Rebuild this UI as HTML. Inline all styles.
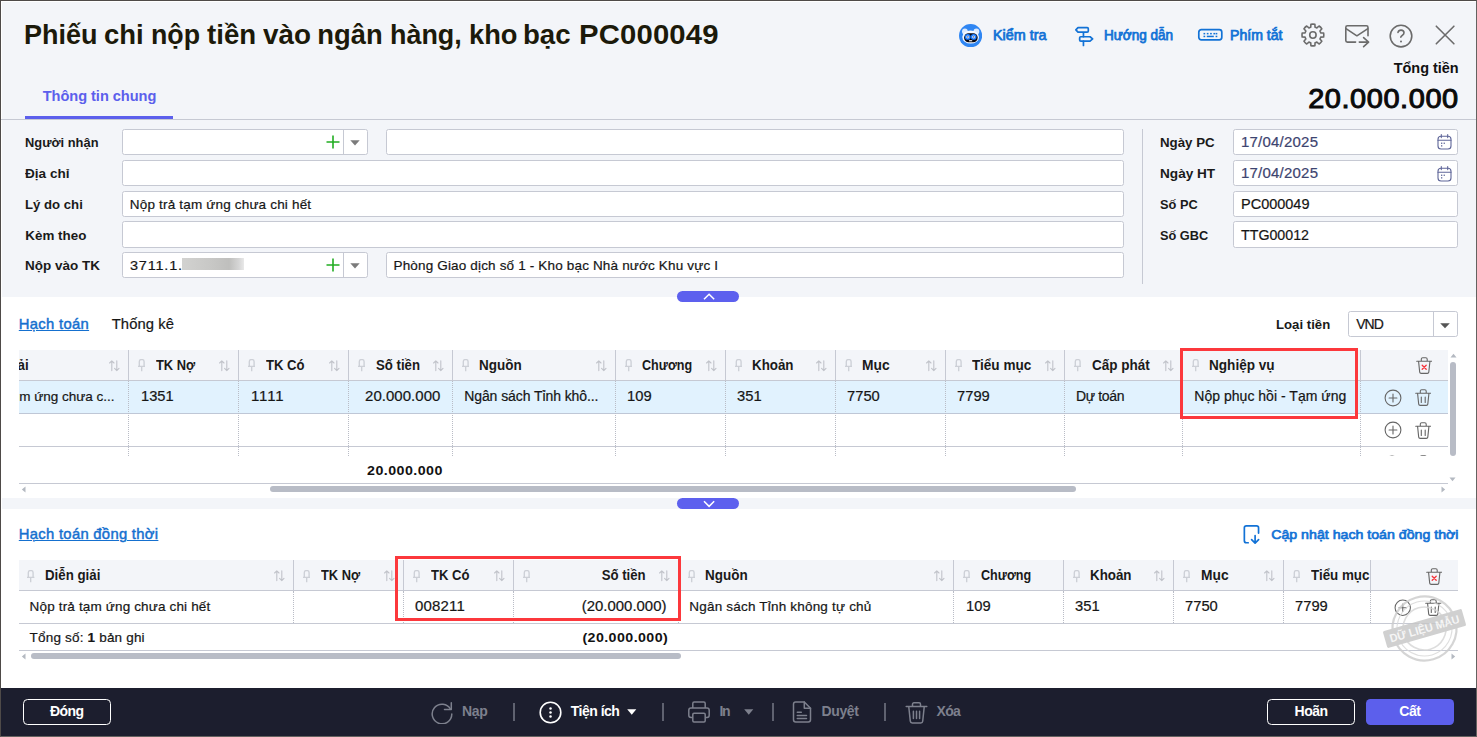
<!DOCTYPE html>
<html lang="vi">
<head>
<meta charset="utf-8">
<title>Phiếu chi nộp tiền vào ngân hàng, kho bạc PC000049</title>
<style>
*{box-sizing:border-box;margin:0;padding:0}
html,body{width:1477px;height:737px;overflow:hidden}
body{background:#f3f5f9;font-family:"Liberation Sans",sans-serif;font-size:14px;color:#1f1f1f;position:relative}
.a{position:absolute;white-space:nowrap}
.b{font-weight:700}
b{font-weight:700}
#frame{position:absolute;left:0;top:0;width:1477px;height:737px;border:1px solid #4e4a48;border-right-color:#646260;border-bottom-color:#646260;pointer-events:none;z-index:50}
#frame2{position:absolute;left:1px;top:1px;width:1475px;height:1px;background:#fff}
#frame3{position:absolute;left:1px;top:1px;width:1px;height:687px;background:#fff}
</style>
</head>
<body>
<div id="frame"></div><div id="frame2"></div><div id="frame3"></div>
<h1 class="a" style="left:0;top:0;width:760px;height:60px;font-size:27.400px;font-weight:700"><span class="a " style="top:18.80px;font-size:27.4px;line-height:31px;color:#1c1a0a;font-weight:700;left:24.10px;transform:scaleX(0.9855);transform-origin:0 50%;">Phiếu</span> <span class="a " style="top:18.80px;font-size:27.4px;line-height:31px;color:#1c1a0a;font-weight:700;left:104.40px;transform:scaleX(1.0031);transform-origin:0 50%;">chi</span> <span class="a " style="top:18.80px;font-size:27.4px;line-height:31px;color:#1c1a0a;font-weight:700;left:151.40px;transform:scaleX(0.9780);transform-origin:0 50%;">nộp</span> <span class="a " style="top:18.80px;font-size:27.4px;line-height:31px;color:#1c1a0a;font-weight:700;left:207.30px;transform:scaleX(1.0102);transform-origin:0 50%;">tiền</span> <span class="a " style="top:18.80px;font-size:27.4px;line-height:31px;color:#1c1a0a;font-weight:700;left:263.00px;transform:scaleX(1.0169);transform-origin:0 50%;">vào</span> <span class="a " style="top:18.80px;font-size:27.4px;line-height:31px;color:#1c1a0a;font-weight:700;left:317.30px;">ngân</span> <span class="a " style="top:18.80px;font-size:27.4px;line-height:31px;color:#1c1a0a;font-weight:700;left:389.60px;transform:scaleX(0.9829);transform-origin:0 50%;">hàng,</span> <span class="a " style="top:18.80px;font-size:27.4px;line-height:31px;color:#1c1a0a;font-weight:700;left:468.60px;transform:scaleX(0.9958);transform-origin:0 50%;">kho</span> <span class="a " style="top:18.80px;font-size:27.4px;line-height:31px;color:#1c1a0a;font-weight:700;left:523.40px;transform:scaleX(1.0084);transform-origin:0 50%;">bạc</span> <span class="a " style="top:18.80px;font-size:27.4px;line-height:31px;color:#1c1a0a;font-weight:700;letter-spacing:0.132px;left:578.60px;transform:scaleX(1.0700);transform-origin:0 50%;">PC000049</span></h1>
<div class="a " style="top:87.60px;font-size:14.6px;line-height:16px;color:#5c5fec;font-weight:700;letter-spacing:-0.043px;left:42.70px;">Thông tin chung</div>
<div class="a" style="left:25px;top:116px;width:148px;height:3px;background:#5c5fec"></div>
<div class="a" style="left:1px;top:119px;width:1475px;height:1px;background:#c6c9d3"></div>
<svg class="a" style="left:958.9px;top:23.7px;" width="23.2" height="23.4" viewBox="0 0 23.2 23.4" fill="none"><circle cx="11.600" cy="11.700" r="11.600" fill="#2f86f3"/>
<circle cx="5.900" cy="7.400" r="2.900" fill="#dbe9fd"/><circle cx="17.400" cy="7.400" r="2.900" fill="#dbe9fd"/>
<ellipse cx="11.650" cy="13" rx="8.400" ry="6.600" fill="#f4f8ff"/>
<rect x="5.100" y="9.300" width="13.600" height="9" rx="4.500" fill="#05050f"/>
<circle cx="8.800" cy="12.900" r="2.900" fill="#1a7bff"/><circle cx="14.700" cy="12.900" r="2.900" fill="#1a7bff"/>
<circle cx="8.800" cy="12.900" r="1.500" fill="#eef4ff"/><circle cx="14.700" cy="12.900" r="1.500" fill="#eef4ff"/>
<circle cx="8.900" cy="12.900" r=".65" fill="#1c1c40"/><circle cx="14.800" cy="12.900" r=".65" fill="#1c1c40"/>
<rect x="10.100" y="16.200" width="3.100" height="1.100" fill="#fff"/></svg>
<div class="a " style="top:28.00px;font-size:13.8px;line-height:15px;color:#1272d6;-webkit-text-stroke:.2px;left:993.20px;transform:scaleX(1.0394);transform-origin:0 50%;-webkit-text-stroke:.75px;">Kiểm tra</div>
<svg class="a" style="left:1073px;top:25px;" width="22" height="22" viewBox="0 0 22 22" fill="none"><g stroke="#1272d6" stroke-width="1.700" stroke-linejoin="round" stroke-linecap="round"><path d="M10.450 7.100v4.600M10.450 16.100v4.300M5 2.550h9.200c.6 0 1.100.5 1.100 1.100v2.300c0 .6-.5 1.100-1.100 1.100H5L2.850 4.800z"/><path d="M7.750 11.750h9.300l2.600 2.150-2.600 2.150H7.750c-.6 0-1.100-.5-1.100-1.100v-2.100c0-.6.500-1.100 1.100-1.100z"/></g></svg>
<div class="a " style="top:28.00px;font-size:13.8px;line-height:15px;color:#1272d6;-webkit-text-stroke:.2px;left:1104.20px;transform:scaleX(0.9794);transform-origin:0 50%;-webkit-text-stroke:.75px;">Hướng dẫn</div>
<svg class="a" style="left:1197px;top:27px;" width="27" height="16" viewBox="0 0 27 16" fill="none"><rect x="1.800" y="2.650" width="23" height="10.200" rx="2.500" stroke="#1272d6" stroke-width="1.700"/>
<g fill="#1272d6"><rect x="6.500" y="5.900" width="1.700" height="1.500"/><rect x="9.800" y="5.900" width="1.700" height="1.500"/><rect x="13.100" y="5.900" width="1.700" height="1.500"/><rect x="16.400" y="5.900" width="1.700" height="1.500"/><rect x="18.600" y="5.900" width="1.700" height="1.500"/><rect x="6.500" y="8.700" width="1.700" height="1.500"/><rect x="9.800" y="8.700" width="7" height="1.500"/><rect x="18.600" y="8.700" width="1.700" height="1.500"/></g></svg>
<div class="a " style="top:28.00px;font-size:13.8px;line-height:15px;color:#1272d6;-webkit-text-stroke:.2px;left:1230.40px;transform:scaleX(1.0219);transform-origin:0 50%;-webkit-text-stroke:.75px;">Phím tắt</div>
<svg class="a" style="left:1300px;top:22px;" width="26" height="26" viewBox="0 0 26 26" fill="none"><path d="M10.74 5.19L10.91 2.28A10.9 10.9 0 0 1 14.89 2.28L15.06 5.19A8.1 8.1 0 0 1 16.89 5.95L19.07 4.02A10.9 10.9 0 0 1 21.88 6.83L19.95 9.01A8.1 8.1 0 0 1 20.71 10.84L23.62 11.01A10.9 10.9 0 0 1 23.62 14.99L20.71 15.16A8.1 8.1 0 0 1 19.95 16.99L21.88 19.17A10.9 10.9 0 0 1 19.07 21.98L16.89 20.05A8.1 8.1 0 0 1 15.06 20.81L14.89 23.72A10.9 10.9 0 0 1 10.91 23.72L10.74 20.81A8.1 8.1 0 0 1 8.91 20.05L6.73 21.98A10.9 10.9 0 0 1 3.92 19.17L5.85 16.99A8.1 8.1 0 0 1 5.09 15.16L2.18 14.99A10.9 10.9 0 0 1 2.18 11.01L5.09 10.84A8.1 8.1 0 0 1 5.85 9.01L3.92 6.83A10.9 10.9 0 0 1 6.73 4.02L8.91 5.95A8.1 8.1 0 0 1 10.74 5.19Z" stroke="#6b6b6b" stroke-width="1.600" stroke-linejoin="round"/><circle cx="12.900" cy="13" r="3.200" stroke="#6b6b6b" stroke-width="1.600"/></svg>
<svg class="a" style="left:1343px;top:23px;" width="28" height="26" viewBox="0 0 28 26" fill="none"><g stroke="#6b6b6b" stroke-width="1.600" stroke-linecap="round" stroke-linejoin="round"><path d="M12.600 19.100H4.400c-.9 0-1.600-.7-1.600-1.600V4.400c0-.9.700-1.600 1.600-1.600h19c.9 0 1.600.7 1.600 1.600v8.300"/><path d="M3.400 5.800l10.500 7 10.600-7"/><path d="M16.300 19.100h9.200M20.600 14.600l5 4.500-5 4.500"/></g></svg>
<svg class="a" style="left:1388px;top:23px;" width="26" height="26" viewBox="0 0 26 26" fill="none"><circle cx="13" cy="13.100" r="10.800" stroke="#6b6b6b" stroke-width="1.600"/><path d="M10 9.400c.3-1.500 1.500-2.300 3-2.300 1.700 0 3 1.100 3 2.700 0 2.200-2.400 2.600-3.200 4.300" stroke="#6b6b6b" stroke-width="1.600" stroke-linecap="round"/><circle cx="13" cy="18.600" r="1" fill="#6b6b6b"/></svg>
<svg class="a" style="left:1433px;top:23px;" width="24" height="24" viewBox="0 0 24 24" fill="none"><path d="M3.300 3.200l17.600 17.600M20.900 3.200L3.300 20.800" stroke="#6b6b6b" stroke-width="1.600" stroke-linecap="round"/></svg>
<div class="a " style="top:60.40px;font-size:14.6px;line-height:16px;color:#111;font-weight:700;right:18.40px;transform:scaleX(0.9898);transform-origin:100% 50%;">Tổng tiền</div>
<div class="a " style="top:84.40px;font-size:27px;line-height:30px;color:#0a0a0a;letter-spacing:0.561px;right:18.20px;transform:scaleX(1.0700);transform-origin:100% 50%;-webkit-text-stroke:1px #0a0a0a;">20.000.000</div>
<div class="a " style="top:134.90px;font-size:13.4px;line-height:15px;color:#1a1a1a;font-weight:700;left:25.30px;transform:scaleX(0.9608);transform-origin:0 50%;">Người nhận</div>
<div class="a " style="top:166.10px;font-size:13.4px;line-height:15px;color:#1a1a1a;font-weight:700;left:25.30px;transform:scaleX(1.0135);transform-origin:0 50%;">Địa chỉ</div>
<div class="a " style="top:197.10px;font-size:13.4px;line-height:15px;color:#1a1a1a;font-weight:700;left:25.30px;transform:scaleX(0.9833);transform-origin:0 50%;">Lý do chi</div>
<div class="a " style="top:228.00px;font-size:13.4px;line-height:15px;color:#1a1a1a;font-weight:700;left:25.30px;">Kèm theo</div>
<div class="a " style="top:258.00px;font-size:13.4px;line-height:15px;color:#1a1a1a;font-weight:700;left:25.30px;transform:scaleX(1.0066);transform-origin:0 50%;">Nộp vào TK</div>
<div class="a" style="left:122px;top:129px;width:246px;height:26px;background:#fff;border:1px solid #c6c9d3;border-radius:2.500px;"></div>
<div class="a" style="left:343px;top:130px;width:1px;height:24px;background:#c6c9d3"></div>
<svg class="a" style="left:326px;top:135px;" width="14" height="14" viewBox="0 0 14 14" fill="none"><path d="M7 .5v13M.5 7h13" stroke="#22ad22" stroke-width="1.600"/></svg>
<svg class="a" style="left:350px;top:139.5px;" width="10" height="6" viewBox="0 0 10 6" fill="none"><path d="M.3.300h9.400L5 5.500z" fill="#7b7b7b"/></svg>
<div class="a" style="left:122px;top:252px;width:246px;height:26px;background:#fff;border:1px solid #c6c9d3;border-radius:2.500px;"></div>
<div class="a" style="left:343px;top:253px;width:1px;height:24px;background:#c6c9d3"></div>
<svg class="a" style="left:326px;top:258px;" width="14" height="14" viewBox="0 0 14 14" fill="none"><path d="M7 .5v13M.5 7h13" stroke="#22ad22" stroke-width="1.600"/></svg>
<svg class="a" style="left:350px;top:262.5px;" width="10" height="6" viewBox="0 0 10 6" fill="none"><path d="M.3.300h9.400L5 5.500z" fill="#7b7b7b"/></svg>
<div class="a" style="left:386px;top:129px;width:738px;height:26px;background:#fff;border:1px solid #c6c9d3;border-radius:2.500px;"></div>
<div class="a" style="left:386px;top:252px;width:738px;height:26px;background:#fff;border:1px solid #c6c9d3;border-radius:2.500px;"></div>
<div class="a" style="left:122px;top:160px;width:1002px;height:26px;background:#fff;border:1px solid #c6c9d3;border-radius:2.500px;"></div>
<div class="a" style="left:122px;top:191px;width:1002px;height:26px;background:#fff;border:1px solid #c6c9d3;border-radius:2.500px;"></div>
<div class="a" style="left:122px;top:221px;width:1002px;height:27px;background:#fff;border:1px solid #c6c9d3;border-radius:2.500px;"></div>
<div class="a " style="top:197.10px;font-size:13.5px;line-height:15px;color:#161616;-webkit-text-stroke:.2px;letter-spacing:0.181px;left:129.80px;">Nộp trả tạm ứng chưa chi hết</div>
<div class="a " style="top:257.60px;font-size:13.5px;line-height:15px;color:#161616;-webkit-text-stroke:.2px;letter-spacing:0.759px;left:129.80px;transform:scaleX(1.0700);transform-origin:0 50%;">3711.1.</div>
<div class="a" style="left:182px;top:258px;width:62px;height:12px;background:linear-gradient(90deg,#d2d2d0 0%,#c8c8c6 45%,#bfbfbd 76%,#d6d6d6 92%,#e9e9e9 100%);"></div>
<div class="a " style="top:257.60px;font-size:13.5px;line-height:15px;color:#161616;-webkit-text-stroke:.2px;letter-spacing:0.164px;left:393.50px;">Phòng Giao dịch số 1 - Kho bạc Nhà nước Khu vực I</div>
<div class="a" style="left:1142px;top:129px;width:1px;height:155px;background:#c6c9d3"></div>
<div class="a " style="top:134.90px;font-size:13.4px;line-height:15px;color:#1a1a1a;font-weight:700;left:1159.70px;transform:scaleX(0.9931);transform-origin:0 50%;">Ngày PC</div>
<div class="a" style="left:1233px;top:129px;width:225px;height:26px;background:#fff;border:1px solid #c6c9d3;border-radius:2.500px;"></div>
<div class="a " style="top:166.10px;font-size:13.4px;line-height:15px;color:#1a1a1a;font-weight:700;left:1159.70px;transform:scaleX(1.0160);transform-origin:0 50%;">Ngày HT</div>
<div class="a" style="left:1233px;top:160px;width:225px;height:26px;background:#fff;border:1px solid #c6c9d3;border-radius:2.500px;"></div>
<div class="a " style="top:197.10px;font-size:13.4px;line-height:15px;color:#1a1a1a;font-weight:700;left:1159.70px;transform:scaleX(0.9559);transform-origin:0 50%;">Số PC</div>
<div class="a" style="left:1233px;top:191px;width:225px;height:26px;background:#fff;border:1px solid #c6c9d3;border-radius:2.500px;"></div>
<div class="a " style="top:228.00px;font-size:13.4px;line-height:15px;color:#1a1a1a;font-weight:700;left:1159.70px;transform:scaleX(0.9527);transform-origin:0 50%;">Số GBC</div>
<div class="a" style="left:1233px;top:221px;width:225px;height:27px;background:#fff;border:1px solid #c6c9d3;border-radius:2.500px;"></div>
<svg class="a" style="left:1436.5px;top:134px;" width="15" height="16" viewBox="0 0 15 16" fill="none"><g stroke="#5f6699" stroke-width="1.100"><rect x="1" y="2.300" width="13" height="12.700" rx="3"/><path d="M1 6.300h13M4.300.6v3M10.700.6v3" stroke-linecap="round"/></g><g fill="#5f6699"><rect x="4" y="8.600" width="1.300" height="1.300"/><rect x="6.600" y="8.600" width="1.300" height="1.300"/><rect x="4" y="11.200" width="1.300" height="1.300"/></g></svg>
<svg class="a" style="left:1436.5px;top:165.5px;" width="15" height="16" viewBox="0 0 15 16" fill="none"><g stroke="#5f6699" stroke-width="1.100"><rect x="1" y="2.300" width="13" height="12.700" rx="3"/><path d="M1 6.300h13M4.300.6v3M10.700.6v3" stroke-linecap="round"/></g><g fill="#5f6699"><rect x="4" y="8.600" width="1.300" height="1.300"/><rect x="6.600" y="8.600" width="1.300" height="1.300"/><rect x="4" y="11.200" width="1.300" height="1.300"/></g></svg>
<div class="a " style="top:133.90px;font-size:14px;line-height:16px;color:#3d4470;-webkit-text-stroke:.2px;letter-spacing:0.209px;left:1241.30px;transform:scaleX(1.0700);transform-origin:0 50%;">17/04/2025</div>
<div class="a " style="top:164.90px;font-size:14px;line-height:16px;color:#3d4470;-webkit-text-stroke:.2px;letter-spacing:0.209px;left:1241.30px;transform:scaleX(1.0700);transform-origin:0 50%;">17/04/2025</div>
<div class="a " style="top:195.90px;font-size:14px;line-height:16px;color:#161616;-webkit-text-stroke:.2px;left:1241.30px;transform:scaleX(1.0352);transform-origin:0 50%;">PC000049</div>
<div class="a " style="top:226.70px;font-size:14px;line-height:16px;color:#161616;-webkit-text-stroke:.2px;left:1241.30px;transform:scaleX(1.0159);transform-origin:0 50%;">TTG00012</div>
<div class="a" style="left:1px;top:297px;width:1475px;height:201px;background:#fff"></div>
<div class="a" style="left:1px;top:509px;width:1475px;height:179px;background:#fff"></div>
<div class="a" style="left:677px;top:291px;width:62px;height:11px;background:#5d60ee;border-radius:5.500px"></div>
<svg class="a" style="left:703px;top:293.2px;" width="12.2" height="7.5" viewBox="0 0 12.2 7.5" fill="none"><path d="M1 6.200L6.100 1.200l5.100 5" stroke="#fff" stroke-width="1.500" stroke-linecap="butt" stroke-linejoin="miter"/></svg>
<div class="a" style="left:677px;top:498px;width:62px;height:11px;background:#5d60ee;border-radius:5.500px"></div>
<svg class="a" style="left:703px;top:500px;" width="12.2" height="7.5" viewBox="0 0 12.2 7.5" fill="none"><path d="M1 1.200l5.100 5.200L11.200 1.200" stroke="#fff" stroke-width="1.500" stroke-linecap="butt" stroke-linejoin="miter"/></svg>
<div class="a " style="top:315.90px;font-size:14.8px;line-height:16px;color:#1570cf;-webkit-text-stroke:.2px;letter-spacing:0.318px;left:18.80px;text-decoration:underline;text-underline-offset:.6px;text-decoration-thickness:1.200px;-webkit-text-stroke:.45px;">Hạch toán</div>
<div class="a " style="top:315.90px;font-size:14.8px;line-height:16px;color:#161616;-webkit-text-stroke:.2px;letter-spacing:0.085px;left:111.70px;">Thống kê</div>
<div class="a " style="top:317.00px;font-size:13.4px;line-height:15px;color:#1a1a1a;font-weight:700;left:1275.80px;transform:scaleX(0.9843);transform-origin:0 50%;">Loại tiền</div>
<div class="a" style="left:1348px;top:311px;width:110px;height:26px;background:#fff;border:1px solid #c6c9d3;border-radius:2.500px;"></div>
<div class="a" style="left:1433px;top:312px;width:1px;height:24px;background:#c6c9d3"></div>
<div class="a " style="top:316.00px;font-size:14px;line-height:16px;color:#161616;-webkit-text-stroke:.2px;letter-spacing:-0.981px;left:1356.20px;">VND</div>
<svg class="a" style="left:1440px;top:322.5px;" width="10" height="6" viewBox="0 0 10 6" fill="none"><path d="M.2.300h9.600L5 5.300z" fill="#555"/></svg>
<div class="a" style="left:19px;top:350px;width:1429px;height:30px;background:#f3f5f9"></div>
<div class="a" style="left:19px;top:380px;width:1429px;height:1px;background:#c6c9d3"></div>
<div class="a" style="left:19px;top:381px;width:1429px;height:32px;background:#e1f2fe"></div>
<div class="a" style="left:19px;top:413px;width:1429px;height:1px;background:#bfc7d6"></div>
<div class="a" style="left:19px;top:446px;width:1429px;height:1px;background:#c6c9d3"></div>
<div class="a" style="left:128px;top:350px;width:1px;height:30px;background:#c6c9d3"></div>
<div class="a" style="left:128px;top:381px;width:0px;height:75px;border-left:1px dotted #b9bcc6"></div>
<div class="a" style="left:238px;top:350px;width:1px;height:30px;background:#c6c9d3"></div>
<div class="a" style="left:238px;top:381px;width:0px;height:75px;border-left:1px dotted #b9bcc6"></div>
<div class="a" style="left:348px;top:350px;width:1px;height:30px;background:#c6c9d3"></div>
<div class="a" style="left:348px;top:381px;width:0px;height:75px;border-left:1px dotted #b9bcc6"></div>
<div class="a" style="left:452px;top:350px;width:1px;height:30px;background:#c6c9d3"></div>
<div class="a" style="left:452px;top:381px;width:0px;height:75px;border-left:1px dotted #b9bcc6"></div>
<div class="a" style="left:615px;top:350px;width:1px;height:30px;background:#c6c9d3"></div>
<div class="a" style="left:615px;top:381px;width:0px;height:75px;border-left:1px dotted #b9bcc6"></div>
<div class="a" style="left:725px;top:350px;width:1px;height:30px;background:#c6c9d3"></div>
<div class="a" style="left:725px;top:381px;width:0px;height:75px;border-left:1px dotted #b9bcc6"></div>
<div class="a" style="left:835px;top:350px;width:1px;height:30px;background:#c6c9d3"></div>
<div class="a" style="left:835px;top:381px;width:0px;height:75px;border-left:1px dotted #b9bcc6"></div>
<div class="a" style="left:945px;top:350px;width:1px;height:30px;background:#c6c9d3"></div>
<div class="a" style="left:945px;top:381px;width:0px;height:75px;border-left:1px dotted #b9bcc6"></div>
<div class="a" style="left:1064px;top:350px;width:1px;height:30px;background:#c6c9d3"></div>
<div class="a" style="left:1064px;top:381px;width:0px;height:75px;border-left:1px dotted #b9bcc6"></div>
<div class="a" style="left:1182px;top:350px;width:1px;height:30px;background:#c6c9d3"></div>
<div class="a" style="left:1182px;top:381px;width:0px;height:75px;border-left:1px dotted #b9bcc6"></div>
<div class="a" style="left:1360px;top:350px;width:1px;height:30px;background:#c6c9d3"></div>
<div class="a" style="left:1360px;top:381px;width:0px;height:75px;border-left:1px dotted #b9bcc6"></div>
<div class="a" style="left:19px;top:350px;width:100px;height:30px;overflow:hidden"><div class="a b" style="left:-46.300px;top:7px;font-size:14px;line-height:16px;color:#1a1a1a;transform:scaleX(.955);transform-origin:0 50%">Diễn giải</div></div>
<div class="a " style="top:357.00px;font-size:14px;line-height:16px;color:#1a1a1a;font-weight:700;left:156.10px;transform:scaleX(0.9196);transform-origin:0 50%;">TK Nợ</div>
<svg class="a" style="left:137.9px;top:359.4px;" width="7.4" height="12.5" viewBox="0 0 7.4 12.5" fill="none"><path d="M1.300 7.300V2.700Q1.300.6 3.200.6h1Q6.100.6 6.100 2.700v4.600M0 7.400h7.400M3.700 7.400v4.800" stroke="#cdd0d7" stroke-width="1.350"/></svg>
<div class="a " style="top:357.00px;font-size:14px;line-height:16px;color:#1a1a1a;font-weight:700;left:266.00px;transform:scaleX(0.9340);transform-origin:0 50%;">TK Có</div>
<svg class="a" style="left:247.9px;top:359.4px;" width="7.4" height="12.5" viewBox="0 0 7.4 12.5" fill="none"><path d="M1.300 7.300V2.700Q1.300.6 3.200.6h1Q6.100.6 6.100 2.700v4.600M0 7.400h7.400M3.700 7.400v4.800" stroke="#cdd0d7" stroke-width="1.350"/></svg>
<div class="a " style="top:357.00px;font-size:14px;line-height:16px;color:#1a1a1a;font-weight:700;left:375.60px;transform:scaleX(0.9428);transform-origin:0 50%;">Số tiền</div>
<svg class="a" style="left:357.90000000000003px;top:359.4px;" width="7.4" height="12.5" viewBox="0 0 7.4 12.5" fill="none"><path d="M1.300 7.300V2.700Q1.300.6 3.200.6h1Q6.100.6 6.100 2.700v4.600M0 7.400h7.400M3.700 7.400v4.800" stroke="#cdd0d7" stroke-width="1.350"/></svg>
<div class="a " style="top:357.00px;font-size:14px;line-height:16px;color:#1a1a1a;font-weight:700;left:479.30px;transform:scaleX(0.9633);transform-origin:0 50%;">Nguồn</div>
<svg class="a" style="left:461.90000000000003px;top:359.4px;" width="7.4" height="12.5" viewBox="0 0 7.4 12.5" fill="none"><path d="M1.300 7.300V2.700Q1.300.6 3.200.6h1Q6.100.6 6.100 2.700v4.600M0 7.400h7.400M3.700 7.400v4.800" stroke="#cdd0d7" stroke-width="1.350"/></svg>
<div class="a " style="top:357.00px;font-size:14px;line-height:16px;color:#1a1a1a;font-weight:700;left:642.20px;transform:scaleX(0.8987);transform-origin:0 50%;">Chương</div>
<svg class="a" style="left:624.9px;top:359.4px;" width="7.4" height="12.5" viewBox="0 0 7.4 12.5" fill="none"><path d="M1.300 7.300V2.700Q1.300.6 3.200.6h1Q6.100.6 6.100 2.700v4.600M0 7.400h7.400M3.700 7.400v4.800" stroke="#cdd0d7" stroke-width="1.350"/></svg>
<div class="a " style="top:357.00px;font-size:14px;line-height:16px;color:#1a1a1a;font-weight:700;left:752.00px;transform:scaleX(0.9527);transform-origin:0 50%;">Khoản</div>
<svg class="a" style="left:734.9px;top:359.4px;" width="7.4" height="12.5" viewBox="0 0 7.4 12.5" fill="none"><path d="M1.300 7.300V2.700Q1.300.6 3.200.6h1Q6.100.6 6.100 2.700v4.600M0 7.400h7.400M3.700 7.400v4.800" stroke="#cdd0d7" stroke-width="1.350"/></svg>
<div class="a " style="top:357.00px;font-size:14px;line-height:16px;color:#1a1a1a;font-weight:700;left:862.40px;transform:scaleX(0.9857);transform-origin:0 50%;">Mục</div>
<svg class="a" style="left:844.9px;top:359.4px;" width="7.4" height="12.5" viewBox="0 0 7.4 12.5" fill="none"><path d="M1.300 7.300V2.700Q1.300.6 3.200.6h1Q6.100.6 6.100 2.700v4.600M0 7.400h7.400M3.700 7.400v4.800" stroke="#cdd0d7" stroke-width="1.350"/></svg>
<div class="a " style="top:357.00px;font-size:14px;line-height:16px;color:#1a1a1a;font-weight:700;left:972.30px;transform:scaleX(0.9689);transform-origin:0 50%;">Tiểu mục</div>
<svg class="a" style="left:954.9px;top:359.4px;" width="7.4" height="12.5" viewBox="0 0 7.4 12.5" fill="none"><path d="M1.300 7.300V2.700Q1.300.6 3.200.6h1Q6.100.6 6.100 2.700v4.600M0 7.400h7.400M3.700 7.400v4.800" stroke="#cdd0d7" stroke-width="1.350"/></svg>
<div class="a " style="top:357.00px;font-size:14px;line-height:16px;color:#1a1a1a;font-weight:700;left:1091.80px;transform:scaleX(0.9651);transform-origin:0 50%;">Cấp phát</div>
<svg class="a" style="left:1073.8999999999999px;top:359.4px;" width="7.4" height="12.5" viewBox="0 0 7.4 12.5" fill="none"><path d="M1.300 7.300V2.700Q1.300.6 3.200.6h1Q6.100.6 6.100 2.700v4.600M0 7.400h7.400M3.700 7.400v4.800" stroke="#cdd0d7" stroke-width="1.350"/></svg>
<div class="a " style="top:357.00px;font-size:14px;line-height:16px;color:#1a1a1a;font-weight:700;left:1209.40px;transform:scaleX(0.9694);transform-origin:0 50%;">Nghiệp vụ</div>
<svg class="a" style="left:1191.8999999999999px;top:359.4px;" width="7.4" height="12.5" viewBox="0 0 7.4 12.5" fill="none"><path d="M1.300 7.300V2.700Q1.300.6 3.200.6h1Q6.100.6 6.100 2.700v4.600M0 7.400h7.400M3.700 7.400v4.800" stroke="#cdd0d7" stroke-width="1.350"/></svg>
<svg class="a" style="left:109px;top:359.8px;" width="10.6" height="12.2" viewBox="0 0 10.6 12.2" fill="none"><g stroke="#c1c3ca" stroke-width="1.100" stroke-linecap="round" stroke-linejoin="round"><path d="M2.800 10.600V.8M.6 3L2.800.8 5 3M7.800.8v9.800M5.600 8.400l2.200 2.200L10 8.400"/></g></svg>
<svg class="a" style="left:219px;top:359.8px;" width="10.6" height="12.2" viewBox="0 0 10.6 12.2" fill="none"><g stroke="#c1c3ca" stroke-width="1.100" stroke-linecap="round" stroke-linejoin="round"><path d="M2.800 10.600V.8M.6 3L2.800.8 5 3M7.800.8v9.800M5.600 8.400l2.200 2.200L10 8.400"/></g></svg>
<svg class="a" style="left:329px;top:359.8px;" width="10.6" height="12.2" viewBox="0 0 10.6 12.2" fill="none"><g stroke="#c1c3ca" stroke-width="1.100" stroke-linecap="round" stroke-linejoin="round"><path d="M2.800 10.600V.8M.6 3L2.800.8 5 3M7.800.8v9.800M5.600 8.400l2.200 2.200L10 8.400"/></g></svg>
<svg class="a" style="left:433px;top:359.8px;" width="10.6" height="12.2" viewBox="0 0 10.6 12.2" fill="none"><g stroke="#c1c3ca" stroke-width="1.100" stroke-linecap="round" stroke-linejoin="round"><path d="M2.800 10.600V.8M.6 3L2.800.8 5 3M7.800.8v9.800M5.600 8.400l2.200 2.200L10 8.400"/></g></svg>
<svg class="a" style="left:596px;top:359.8px;" width="10.6" height="12.2" viewBox="0 0 10.6 12.2" fill="none"><g stroke="#c1c3ca" stroke-width="1.100" stroke-linecap="round" stroke-linejoin="round"><path d="M2.800 10.600V.8M.6 3L2.800.8 5 3M7.800.8v9.800M5.600 8.400l2.200 2.200L10 8.400"/></g></svg>
<svg class="a" style="left:706px;top:359.8px;" width="10.6" height="12.2" viewBox="0 0 10.6 12.2" fill="none"><g stroke="#c1c3ca" stroke-width="1.100" stroke-linecap="round" stroke-linejoin="round"><path d="M2.800 10.600V.8M.6 3L2.800.8 5 3M7.800.8v9.800M5.600 8.400l2.200 2.200L10 8.400"/></g></svg>
<svg class="a" style="left:816px;top:359.8px;" width="10.6" height="12.2" viewBox="0 0 10.6 12.2" fill="none"><g stroke="#c1c3ca" stroke-width="1.100" stroke-linecap="round" stroke-linejoin="round"><path d="M2.800 10.600V.8M.6 3L2.800.8 5 3M7.800.8v9.800M5.600 8.400l2.200 2.200L10 8.400"/></g></svg>
<svg class="a" style="left:926px;top:359.8px;" width="10.6" height="12.2" viewBox="0 0 10.6 12.2" fill="none"><g stroke="#c1c3ca" stroke-width="1.100" stroke-linecap="round" stroke-linejoin="round"><path d="M2.800 10.600V.8M.6 3L2.800.8 5 3M7.800.8v9.800M5.600 8.400l2.200 2.200L10 8.400"/></g></svg>
<svg class="a" style="left:1045px;top:359.8px;" width="10.6" height="12.2" viewBox="0 0 10.6 12.2" fill="none"><g stroke="#c1c3ca" stroke-width="1.100" stroke-linecap="round" stroke-linejoin="round"><path d="M2.800 10.600V.8M.6 3L2.800.8 5 3M7.800.8v9.800M5.600 8.400l2.200 2.200L10 8.400"/></g></svg>
<svg class="a" style="left:1163px;top:359.8px;" width="10.6" height="12.2" viewBox="0 0 10.6 12.2" fill="none"><g stroke="#c1c3ca" stroke-width="1.100" stroke-linecap="round" stroke-linejoin="round"><path d="M2.800 10.600V.8M.6 3L2.800.8 5 3M7.800.8v9.800M5.600 8.400l2.200 2.200L10 8.400"/></g></svg>
<div class="a " style="top:389.00px;font-size:13.5px;line-height:15px;color:#161616;-webkit-text-stroke:.2px;left:19.20px;">m ứng chưa c...</div>
<div class="a " style="top:388.00px;font-size:14px;line-height:16px;color:#161616;-webkit-text-stroke:.2px;left:140.60px;transform:scaleX(1.0463);transform-origin:0 50%;">1351</div>
<div class="a " style="top:388.00px;font-size:14px;line-height:16px;color:#161616;-webkit-text-stroke:.2px;letter-spacing:0.812px;left:250.50px;transform:scaleX(1.0700);transform-origin:0 50%;">1111</div>
<div class="a " style="top:388.00px;font-size:14px;line-height:16px;color:#161616;-webkit-text-stroke:.2px;letter-spacing:0.033px;right:1036.16px;transform:scaleX(1.0700);transform-origin:100% 50%;">20.000.000</div>
<div class="a " style="top:388.00px;font-size:14px;line-height:16px;color:#161616;-webkit-text-stroke:.2px;letter-spacing:-0.082px;left:464.20px;">Ngân sách Tỉnh khô...</div>
<div class="a " style="top:388.00px;font-size:14px;line-height:16px;color:#161616;-webkit-text-stroke:.2px;left:627.40px;transform:scaleX(1.0531);transform-origin:0 50%;">109</div>
<div class="a " style="top:388.00px;font-size:14px;line-height:16px;color:#161616;-webkit-text-stroke:.2px;left:737.10px;transform:scaleX(1.0531);transform-origin:0 50%;">351</div>
<div class="a " style="top:388.00px;font-size:14px;line-height:16px;color:#161616;-webkit-text-stroke:.2px;left:847.30px;transform:scaleX(1.0528);transform-origin:0 50%;">7750</div>
<div class="a " style="top:388.00px;font-size:14px;line-height:16px;color:#161616;-webkit-text-stroke:.2px;left:957.30px;transform:scaleX(1.0528);transform-origin:0 50%;">7799</div>
<div class="a " style="top:388.00px;font-size:14px;line-height:16px;color:#161616;-webkit-text-stroke:.2px;letter-spacing:-0.354px;left:1076.00px;">Dự toán</div>
<div class="a " style="top:388.00px;font-size:14px;line-height:16px;color:#161616;-webkit-text-stroke:.2px;letter-spacing:0.022px;left:1194.30px;">Nộp phục hồi - Tạm ứng</div>
<div class="a " style="top:462.80px;font-size:13.3px;line-height:15px;color:#111;font-weight:700;letter-spacing:0.423px;right:1033.75px;transform:scaleX(1.0700);transform-origin:100% 50%;">20.000.000</div>
<svg class="a" style="left:1415.7px;top:356.6px;" width="16.5" height="17.5" viewBox="0 0 16.5 17.5" fill="none"><g stroke="#666" stroke-width="1.100" stroke-linecap="round" stroke-linejoin="round"><path d="M.7 4.300h15.100M5.300 4V2.200c0-.8.600-1.400 1.400-1.400h3.100c.8 0 1.400.6 1.400 1.400V4M2.600 4.600l1.100 10.500c.1.800.7 1.300 1.400 1.300h6.300c.8 0 1.300-.5 1.400-1.300l1.100-10.500"/></g><path d="M6.200 8.300l4 4M10.200 8.300l-4 4" stroke="#f5333a" stroke-width="1.300" stroke-linecap="round"/></svg>
<svg class="a" style="left:1383.5px;top:388.5px;" width="18" height="18" viewBox="0 0 18 18" fill="none"><circle cx="9" cy="9" r="7.900" stroke="#666" stroke-width="1.100"/><path d="M9 5.100v7.800M5.100 9h7.800" stroke="#666" stroke-width="1.100" stroke-linecap="round"/></svg>
<svg class="a" style="left:1414.6px;top:389.2px;" width="16.5" height="17.5" viewBox="0 0 16.5 17.5" fill="none"><g stroke="#666" stroke-width="1.100" stroke-linecap="round" stroke-linejoin="round"><path d="M.7 4.300h15.100M5.300 4V2.200c0-.8.600-1.400 1.400-1.400h3.100c.8 0 1.400.6 1.400 1.400V4M2.600 4.600l1.100 10.500c.1.800.7 1.300 1.400 1.300h6.300c.8 0 1.300-.5 1.400-1.300l1.100-10.500M6.300 8v5.400M10.200 8v5.400"/></g></svg>
<svg class="a" style="left:1383.5px;top:421.0px;" width="18" height="18" viewBox="0 0 18 18" fill="none"><circle cx="9" cy="9" r="7.900" stroke="#666" stroke-width="1.100"/><path d="M9 5.100v7.800M5.100 9h7.800" stroke="#666" stroke-width="1.100" stroke-linecap="round"/></svg>
<svg class="a" style="left:1414.6px;top:421.7px;" width="16.5" height="17.5" viewBox="0 0 16.5 17.5" fill="none"><g stroke="#666" stroke-width="1.100" stroke-linecap="round" stroke-linejoin="round"><path d="M.7 4.300h15.100M5.300 4V2.200c0-.8.600-1.400 1.400-1.400h3.100c.8 0 1.400.6 1.400 1.400V4M2.600 4.600l1.100 10.500c.1.800.7 1.300 1.400 1.300h6.300c.8 0 1.300-.5 1.400-1.300l1.100-10.500M6.300 8v5.400M10.200 8v5.400"/></g></svg>
<div class="a" style="left:1380px;top:446px;width:60px;height:10px;overflow:hidden"><svg class="a" style="left:3.400px;top:8.500px" width="18" height="18" viewBox="0 0 18 18" fill="none"><circle cx="9" cy="9" r="7.900" stroke="#666" stroke-width="1.100"/><path d="M9 5.100v7.800M5.100 9h7.800" stroke="#666" stroke-width="1.100" stroke-linecap="round"/></svg><svg class="a" style="left:34.600px;top:9px" width="16.500" height="17.500" viewBox="0 0 16.500 17.500" fill="none"><g stroke="#666" stroke-width="1.100" stroke-linecap="round" stroke-linejoin="round"><path d="M.7 4.300h15.100M5.300 4V2.200c0-.8.600-1.400 1.400-1.400h3.100c.8 0 1.400.6 1.400 1.400V4M2.600 4.600l1.100 10.500c.1.800.7 1.300 1.400 1.300h6.300c.8 0 1.300-.5 1.400-1.300l1.100-10.500M6.300 8v5.400M10.200 8v5.400"/></g></svg></div>
<div class="a" style="left:19px;top:483px;width:1429px;height:1px;background:#c6c9d3"></div>
<div class="a" style="left:270px;top:486px;width:806px;height:6px;background:#b8bcc6;border-radius:3px"></div>
<svg class="a" style="left:21px;top:485.5px;" width="5" height="7" viewBox="0 0 5 7" fill="none"><path d="M4.500.5v6L.8 3.500z" fill="#b4b9c1"/></svg>
<svg class="a" style="left:1440.5px;top:485.5px;" width="5" height="7" viewBox="0 0 5 7" fill="none"><path d="M.5.500v6l3.700-3z" fill="#b4b9c1"/></svg>
<div class="a" style="left:1449.5px;top:362px;width:6px;height:93.5px;background:#b8bcc6;border-radius:3px"></div>
<svg class="a" style="left:1449.5px;top:352.7px;" width="7" height="5" viewBox="0 0 7 5" fill="none"><path d="M.5 4.500h6l-3-3.700z" fill="#b4b9c1"/></svg>
<svg class="a" style="left:1449px;top:476.5px;" width="7" height="5" viewBox="0 0 7 5" fill="none"><path d="M.5.500h6l-3 3.700z" fill="#b4b9c1"/></svg>
<div class="a" style="left:1180px;top:348px;width:178px;height:71px;border:3px solid #fc383c"></div>
<div class="a " style="top:526.20px;font-size:14.8px;line-height:16px;color:#1570cf;-webkit-text-stroke:.2px;letter-spacing:0.298px;left:18.80px;text-decoration:underline;text-underline-offset:.6px;text-decoration-thickness:1.200px;-webkit-text-stroke:.45px;">Hạch toán đồng thời</div>
<svg class="a" style="left:1242px;top:523.5px;" width="20" height="22" viewBox="0 0 20 22" fill="none"><g stroke="#1272d6" stroke-width="1.700" stroke-linecap="round" stroke-linejoin="round"><path d="M6.200 18.750H4.350c-1.100 0-2-.9-2-2V3.850c0-1.100.9-2 2-2h10.200c1.100 0 2 .9 2 2v5.250"/><path d="M13.100 11.600v7.400M9.600 15.600l3.500 3.450 3.500-3.450"/></g></svg>
<div class="a " style="top:526.80px;font-size:13.5px;line-height:15px;color:#1272d6;-webkit-text-stroke:.2px;right:18.50px;transform:scaleX(1.0493);transform-origin:100% 50%;-webkit-text-stroke:.7px;">Cập nhật hạch toán đồng thời</div>
<div class="a" style="left:19px;top:560px;width:1439px;height:30px;background:#f3f5f9"></div>
<div class="a" style="left:19px;top:590px;width:1439px;height:1px;background:#c6c9d3"></div>
<div class="a" style="left:19px;top:623px;width:1439px;height:1px;background:#c6c9d3"></div>
<div class="a" style="left:19px;top:650px;width:1439px;height:1px;background:#c6c9d3"></div>
<div class="a" style="left:293px;top:560px;width:1px;height:30px;background:#c6c9d3"></div>
<div class="a" style="left:293px;top:591px;width:0px;height:32px;border-left:1px dotted #b9bcc6"></div>
<div class="a" style="left:403px;top:560px;width:1px;height:30px;background:#c6c9d3"></div>
<div class="a" style="left:403px;top:591px;width:0px;height:32px;border-left:1px dotted #b9bcc6"></div>
<div class="a" style="left:513px;top:560px;width:1px;height:30px;background:#c6c9d3"></div>
<div class="a" style="left:513px;top:591px;width:0px;height:32px;border-left:1px dotted #b9bcc6"></div>
<div class="a" style="left:678px;top:560px;width:1px;height:30px;background:#c6c9d3"></div>
<div class="a" style="left:678px;top:591px;width:0px;height:32px;border-left:1px dotted #b9bcc6"></div>
<div class="a" style="left:953px;top:560px;width:1px;height:30px;background:#c6c9d3"></div>
<div class="a" style="left:953px;top:591px;width:0px;height:32px;border-left:1px dotted #b9bcc6"></div>
<div class="a" style="left:1063px;top:560px;width:1px;height:30px;background:#c6c9d3"></div>
<div class="a" style="left:1063px;top:591px;width:0px;height:32px;border-left:1px dotted #b9bcc6"></div>
<div class="a" style="left:1173px;top:560px;width:1px;height:30px;background:#c6c9d3"></div>
<div class="a" style="left:1173px;top:591px;width:0px;height:32px;border-left:1px dotted #b9bcc6"></div>
<div class="a" style="left:1283px;top:560px;width:1px;height:30px;background:#c6c9d3"></div>
<div class="a" style="left:1283px;top:591px;width:0px;height:32px;border-left:1px dotted #b9bcc6"></div>
<div class="a" style="left:1370px;top:560px;width:1px;height:30px;background:#c6c9d3"></div>
<div class="a" style="left:1370px;top:591px;width:0px;height:32px;border-left:1px dotted #b9bcc6"></div>
<div class="a " style="top:567.00px;font-size:14px;line-height:16px;color:#1a1a1a;font-weight:700;left:45.20px;transform:scaleX(0.9493);transform-origin:0 50%;">Diễn giải</div>
<svg class="a" style="left:27.200000000000003px;top:570.0px;" width="7.4" height="12.5" viewBox="0 0 7.4 12.5" fill="none"><path d="M1.300 7.300V2.700Q1.300.6 3.200.6h1Q6.100.6 6.100 2.700v4.600M0 7.400h7.400M3.700 7.400v4.800" stroke="#cdd0d7" stroke-width="1.350"/></svg>
<svg class="a" style="left:274px;top:569.8px;" width="10.6" height="12.2" viewBox="0 0 10.6 12.2" fill="none"><g stroke="#c1c3ca" stroke-width="1.100" stroke-linecap="round" stroke-linejoin="round"><path d="M2.800 10.600V.8M.6 3L2.800.8 5 3M7.800.8v9.800M5.600 8.400l2.200 2.200L10 8.400"/></g></svg>
<div class="a " style="top:567.00px;font-size:14px;line-height:16px;color:#1a1a1a;font-weight:700;left:320.70px;transform:scaleX(0.9196);transform-origin:0 50%;">TK Nợ</div>
<svg class="a" style="left:302.90000000000003px;top:570.0px;" width="7.4" height="12.5" viewBox="0 0 7.4 12.5" fill="none"><path d="M1.300 7.300V2.700Q1.300.6 3.200.6h1Q6.100.6 6.100 2.700v4.600M0 7.400h7.400M3.700 7.400v4.800" stroke="#cdd0d7" stroke-width="1.350"/></svg>
<svg class="a" style="left:384px;top:569.8px;" width="10.6" height="12.2" viewBox="0 0 10.6 12.2" fill="none"><g stroke="#c1c3ca" stroke-width="1.100" stroke-linecap="round" stroke-linejoin="round"><path d="M2.800 10.600V.8M.6 3L2.800.8 5 3M7.800.8v9.800M5.600 8.400l2.200 2.200L10 8.400"/></g></svg>
<div class="a " style="top:567.00px;font-size:14px;line-height:16px;color:#1a1a1a;font-weight:700;left:430.80px;transform:scaleX(0.9340);transform-origin:0 50%;">TK Có</div>
<svg class="a" style="left:412.90000000000003px;top:570.0px;" width="7.4" height="12.5" viewBox="0 0 7.4 12.5" fill="none"><path d="M1.300 7.300V2.700Q1.300.6 3.200.6h1Q6.100.6 6.100 2.700v4.600M0 7.400h7.400M3.700 7.400v4.800" stroke="#cdd0d7" stroke-width="1.350"/></svg>
<svg class="a" style="left:494px;top:569.8px;" width="10.6" height="12.2" viewBox="0 0 10.6 12.2" fill="none"><g stroke="#c1c3ca" stroke-width="1.100" stroke-linecap="round" stroke-linejoin="round"><path d="M2.800 10.600V.8M.6 3L2.800.8 5 3M7.800.8v9.800M5.600 8.400l2.200 2.200L10 8.400"/></g></svg>
<div class="a " style="top:567.00px;font-size:14px;line-height:16px;color:#1a1a1a;font-weight:700;left:704.70px;transform:scaleX(0.9633);transform-origin:0 50%;">Nguồn</div>
<svg class="a" style="left:687.9px;top:570.0px;" width="7.4" height="12.5" viewBox="0 0 7.4 12.5" fill="none"><path d="M1.300 7.300V2.700Q1.300.6 3.200.6h1Q6.100.6 6.100 2.700v4.600M0 7.400h7.400M3.700 7.400v4.800" stroke="#cdd0d7" stroke-width="1.350"/></svg>
<svg class="a" style="left:934px;top:569.8px;" width="10.6" height="12.2" viewBox="0 0 10.6 12.2" fill="none"><g stroke="#c1c3ca" stroke-width="1.100" stroke-linecap="round" stroke-linejoin="round"><path d="M2.800 10.600V.8M.6 3L2.800.8 5 3M7.800.8v9.800M5.600 8.400l2.200 2.200L10 8.400"/></g></svg>
<div class="a " style="top:567.00px;font-size:14px;line-height:16px;color:#1a1a1a;font-weight:700;left:980.50px;transform:scaleX(0.8987);transform-origin:0 50%;">Chương</div>
<svg class="a" style="left:962.9px;top:570.0px;" width="7.4" height="12.5" viewBox="0 0 7.4 12.5" fill="none"><path d="M1.300 7.300V2.700Q1.300.6 3.200.6h1Q6.100.6 6.100 2.700v4.600M0 7.400h7.400M3.700 7.400v4.800" stroke="#cdd0d7" stroke-width="1.350"/></svg>
<div class="a " style="top:567.00px;font-size:14px;line-height:16px;color:#1a1a1a;font-weight:700;left:1090.30px;transform:scaleX(0.9527);transform-origin:0 50%;">Khoản</div>
<svg class="a" style="left:1072.8999999999999px;top:570.0px;" width="7.4" height="12.5" viewBox="0 0 7.4 12.5" fill="none"><path d="M1.300 7.300V2.700Q1.300.6 3.200.6h1Q6.100.6 6.100 2.700v4.600M0 7.400h7.400M3.700 7.400v4.800" stroke="#cdd0d7" stroke-width="1.350"/></svg>
<svg class="a" style="left:1154px;top:569.8px;" width="10.6" height="12.2" viewBox="0 0 10.6 12.2" fill="none"><g stroke="#c1c3ca" stroke-width="1.100" stroke-linecap="round" stroke-linejoin="round"><path d="M2.800 10.600V.8M.6 3L2.800.8 5 3M7.800.8v9.800M5.600 8.400l2.200 2.200L10 8.400"/></g></svg>
<div class="a " style="top:567.00px;font-size:14px;line-height:16px;color:#1a1a1a;font-weight:700;left:1200.60px;transform:scaleX(0.9857);transform-origin:0 50%;">Mục</div>
<svg class="a" style="left:1182.8999999999999px;top:570.0px;" width="7.4" height="12.5" viewBox="0 0 7.4 12.5" fill="none"><path d="M1.300 7.300V2.700Q1.300.6 3.200.6h1Q6.100.6 6.100 2.700v4.600M0 7.400h7.400M3.700 7.400v4.800" stroke="#cdd0d7" stroke-width="1.350"/></svg>
<svg class="a" style="left:1264px;top:569.8px;" width="10.6" height="12.2" viewBox="0 0 10.6 12.2" fill="none"><g stroke="#c1c3ca" stroke-width="1.100" stroke-linecap="round" stroke-linejoin="round"><path d="M2.800 10.600V.8M.6 3L2.800.8 5 3M7.800.8v9.800M5.600 8.400l2.200 2.200L10 8.400"/></g></svg>
<div class="a " style="top:567.00px;font-size:14px;line-height:16px;color:#1a1a1a;font-weight:700;right:831.60px;transform:scaleX(0.9428);transform-origin:100% 50%;">Số tiền</div>
<svg class="a" style="left:522.9px;top:570.0px;" width="7.4" height="12.5" viewBox="0 0 7.4 12.5" fill="none"><path d="M1.300 7.300V2.700Q1.300.6 3.200.6h1Q6.100.6 6.100 2.700v4.600M0 7.400h7.400M3.700 7.400v4.800" stroke="#cdd0d7" stroke-width="1.350"/></svg>
<svg class="a" style="left:659.2px;top:569.8px;" width="10.6" height="12.2" viewBox="0 0 10.6 12.2" fill="none"><g stroke="#c1c3ca" stroke-width="1.100" stroke-linecap="round" stroke-linejoin="round"><path d="M2.800 10.600V.8M.6 3L2.800.8 5 3M7.800.8v9.800M5.600 8.400l2.200 2.200L10 8.400"/></g></svg>
<div class="a" style="left:1284px;top:560px;width:86px;height:30px;overflow:hidden"><div class="a b" style="left:27px;top:7px;font-size:14px;line-height:16px;color:#1a1a1a;transform:scaleX(.955);transform-origin:0 50%">Tiểu mục</div></div>
<svg class="a" style="left:1292.8999999999999px;top:570.0px;" width="7.4" height="12.5" viewBox="0 0 7.4 12.5" fill="none"><path d="M1.300 7.300V2.700Q1.300.6 3.200.6h1Q6.100.6 6.100 2.700v4.600M0 7.400h7.400M3.700 7.400v4.800" stroke="#cdd0d7" stroke-width="1.350"/></svg>
<div class="a " style="top:599.10px;font-size:13.5px;line-height:15px;color:#161616;-webkit-text-stroke:.2px;letter-spacing:0.158px;left:29.60px;">Nộp trả tạm ứng chưa chi hết</div>
<div class="a " style="top:598.10px;font-size:14px;line-height:16px;color:#161616;-webkit-text-stroke:.2px;letter-spacing:0.171px;left:415.10px;transform:scaleX(1.0700);transform-origin:0 50%;">008211</div>
<div class="a " style="top:598.10px;font-size:14px;line-height:16px;color:#161616;-webkit-text-stroke:.2px;right:810.80px;transform:scaleX(1.0654);transform-origin:100% 50%;">(20.000.000)</div>
<div class="a " style="top:599.10px;font-size:13.5px;line-height:15px;color:#161616;-webkit-text-stroke:.2px;letter-spacing:0.196px;left:689.30px;">Ngân sách Tỉnh không tự chủ</div>
<div class="a " style="top:598.10px;font-size:14px;line-height:16px;color:#161616;-webkit-text-stroke:.2px;left:965.70px;transform:scaleX(1.0531);transform-origin:0 50%;">109</div>
<div class="a " style="top:598.10px;font-size:14px;line-height:16px;color:#161616;-webkit-text-stroke:.2px;left:1075.00px;transform:scaleX(1.0531);transform-origin:0 50%;">351</div>
<div class="a " style="top:598.10px;font-size:14px;line-height:16px;color:#161616;-webkit-text-stroke:.2px;left:1185.00px;transform:scaleX(1.0528);transform-origin:0 50%;">7750</div>
<div class="a " style="top:598.10px;font-size:14px;line-height:16px;color:#161616;-webkit-text-stroke:.2px;left:1295.00px;transform:scaleX(1.0528);transform-origin:0 50%;">7799</div>
<div class="a " style="top:629.80px;font-size:13.5px;line-height:15px;color:#161616;-webkit-text-stroke:.2px;letter-spacing:0.186px;left:29.60px;">Tổng số: <b>1</b> bản ghi</div>
<div class="a " style="top:629.80px;font-size:13.3px;line-height:15px;color:#111;font-weight:700;letter-spacing:0.401px;right:808.87px;transform:scaleX(1.0700);transform-origin:100% 50%;">(20.000.000)</div>
<svg class="a" style="left:1425.7px;top:568px;" width="16.5" height="17.5" viewBox="0 0 16.5 17.5" fill="none"><g stroke="#666" stroke-width="1.100" stroke-linecap="round" stroke-linejoin="round"><path d="M.7 4.300h15.100M5.300 4V2.200c0-.8.600-1.400 1.400-1.400h3.100c.8 0 1.400.6 1.400 1.400V4M2.600 4.600l1.100 10.500c.1.800.7 1.300 1.400 1.300h6.300c.8 0 1.300-.5 1.400-1.300l1.100-10.500"/></g><path d="M6.200 8.300l4 4M10.200 8.300l-4 4" stroke="#f5333a" stroke-width="1.300" stroke-linecap="round"/></svg>
<svg class="a" style="left:1393.5px;top:598.8px;" width="17.5" height="17.5" viewBox="0 0 18 18" fill="none"><circle cx="9" cy="9" r="7.900" stroke="#666" stroke-width="1.100"/><path d="M9 5.100v7.800M5.100 9h7.800" stroke="#666" stroke-width="1.100" stroke-linecap="round"/></svg>
<svg class="a" style="left:1425px;top:599px;" width="16.5" height="17.5" viewBox="0 0 16.5 17.5" fill="none"><g stroke="#666" stroke-width="1.100" stroke-linecap="round" stroke-linejoin="round"><path d="M.7 4.300h15.100M5.300 4V2.200c0-.8.600-1.400 1.400-1.400h3.100c.8 0 1.400.6 1.400 1.400V4M2.600 4.600l1.100 10.500c.1.800.7 1.300 1.400 1.300h6.300c.8 0 1.300-.5 1.400-1.300l1.100-10.500M6.300 8v5.400M10.200 8v5.400"/></g></svg>
<div class="a" style="left:31px;top:653px;width:650px;height:6px;background:#b8bcc6;border-radius:3px"></div>
<svg class="a" style="left:21px;top:652.7px;" width="5" height="7" viewBox="0 0 5 7" fill="none"><path d="M4.500.5v6L.8 3.500z" fill="#b4b9c1"/></svg>
<svg class="a" style="left:1451px;top:652.7px;" width="5" height="7" viewBox="0 0 5 7" fill="none"><path d="M.5.500v6l3.700-3z" fill="#b4b9c1"/></svg>
<div class="a" style="left:395px;top:556px;width:286px;height:65px;border:3px solid #fc383c"></div>
<svg class="a" style="left:1378px;top:590px" width="96" height="78" viewBox="0 0 96 78" fill="none"><g transform="rotate(-16 46.500 38.500)" opacity=".82"><circle cx="46.500" cy="38.500" r="32" stroke="#cdcdcd" stroke-width="2.200"/><circle cx="46.500" cy="38.500" r="27.500" stroke="#d8d8d8" stroke-width="1.100"/><circle cx="46.500" cy="38.500" r="21.500" stroke="#d6d6d6" stroke-width="1.600"/><rect x="5.500" y="29.700" width="82" height="17.600" rx="1.500" fill="#c6c6c6"/><text x="46.500" y="42.800" text-anchor="middle" font-family="Liberation Sans, sans-serif" font-weight="700" font-size="11.500" fill="#f4f4f4" textLength="72" lengthAdjust="spacingAndGlyphs">DỮ LIỆU MẪU</text></g></svg>
<div class="a" style="left:1px;top:688px;width:1475px;height:48px;background:#1c1e2e"></div>
<div class="a" style="left:23px;top:699px;width:88px;height:26px;border-radius:4.500px;border:1.300px solid #fff;"></div>
<div class="a " style="top:703.00px;font-size:14px;line-height:16px;color:#fff;font-weight:700;letter-spacing:-0.589px;left:50.00px;">Đóng</div>
<div class="a" style="left:1267px;top:699px;width:88px;height:26px;border-radius:4.500px;border:1.300px solid #fff;"></div>
<div class="a " style="top:703.00px;font-size:14px;line-height:16px;color:#fff;font-weight:700;letter-spacing:-0.533px;left:1294.60px;">Hoãn</div>
<div class="a" style="left:1366px;top:699px;width:88px;height:26px;border-radius:4.500px;background:#5c5fec;"></div>
<div class="a " style="top:703.00px;font-size:14px;line-height:16px;color:#fff;font-weight:700;letter-spacing:-0.381px;left:1399.20px;">Cất</div>
<svg class="a" style="left:430px;top:700px;" width="24" height="24" viewBox="0 0 24 24" fill="none"><g stroke="#7d808d" stroke-width="1.500" stroke-linecap="round" stroke-linejoin="round"><path d="M20.600 9.300A9.800 9.800 0 1 0 21.800 14"/><path d="M21.300 2.700v6.800h-6.800"/></g></svg>
<div class="a " style="top:703.30px;font-size:14px;line-height:16px;color:#7d808d;font-weight:700;letter-spacing:-0.427px;left:462.10px;">Nạp</div>
<div class="a" style="left:513px;top:703px;width:1.5px;height:18px;background:#5f6270"></div>
<div class="a" style="left:662px;top:703px;width:1.5px;height:18px;background:#5f6270"></div>
<div class="a" style="left:772px;top:703px;width:1.5px;height:18px;background:#5f6270"></div>
<div class="a" style="left:884px;top:703px;width:1.5px;height:18px;background:#5f6270"></div>
<svg class="a" style="left:538.5px;top:700.5px;" width="23" height="23" viewBox="0 0 23 23" fill="none"><circle cx="11.500" cy="11.500" r="10.300" stroke="#fff" stroke-width="1.600"/><g fill="#fff"><circle cx="11.500" cy="7.400" r="1.250"/><circle cx="11.500" cy="11.500" r="1.250"/><circle cx="11.500" cy="15.600" r="1.250"/></g></svg>
<div class="a " style="top:703.30px;font-size:14px;line-height:16px;color:#fff;font-weight:700;letter-spacing:-0.508px;left:570.80px;">Tiện ích</div>
<svg class="a" style="left:627px;top:709.3px;" width="9.5" height="6" viewBox="0 0 9.5 6" fill="none"><path d="M.2.200h9.100L4.750 5.800z" fill="#fff"/></svg>
<svg class="a" style="left:687px;top:700px;" width="24" height="24" viewBox="0 0 24 24" fill="none"><g stroke="#7d808d" stroke-width="1.500" stroke-linejoin="round"><path d="M5.800 8V3.400c0-.8.600-1.400 1.400-1.400h9.600c.8 0 1.400.6 1.400 1.400V8"/><rect x="1.800" y="8" width="20.400" height="9.500" rx="2.200"/><rect x="5.800" y="13.300" width="12.400" height="8.700" rx="1.200" fill="#1c1e2e"/></g></svg>
<div class="a " style="top:703.30px;font-size:14px;line-height:16px;color:#7d808d;font-weight:700;letter-spacing:-1.253px;left:719.40px;">In</div>
<svg class="a" style="left:744px;top:709.3px;" width="9.5" height="6" viewBox="0 0 9.5 6" fill="none"><path d="M.2.200h9.100L4.750 5.800z" fill="#7d808d"/></svg>
<svg class="a" style="left:790.5px;top:700px;" width="22" height="24" viewBox="0 0 22 24" fill="none"><g stroke="#7d808d" stroke-width="1.500" stroke-linecap="round" stroke-linejoin="round"><path d="M13.300 2H4.700c-1.200 0-2.200 1-2.200 2.200v15.600c0 1.200 1 2.200 2.200 2.200h12.600c1.200 0 2.200-1 2.200-2.200V8.200z"/><path d="M13.300 2v6.200h6.200M6.300 12.300h4M6.300 15.400h9.200M6.300 18.500h9.200"/></g></svg>
<div class="a " style="top:703.30px;font-size:14px;line-height:16px;color:#7d808d;font-weight:700;letter-spacing:-0.327px;left:821.40px;">Duyệt</div>
<svg class="a" style="left:904.5px;top:700.5px;" width="23" height="23" viewBox="0 0 23 23" fill="none"><g stroke="#7d808d" stroke-width="1.500" stroke-linecap="round" stroke-linejoin="round"><path d="M1.200 5.600h20.600M7.500 5.300V3.200c0-.8.600-1.400 1.400-1.400h5.200c.8 0 1.400.6 1.400 1.400v2.100M3.800 6l1.500 14.200c.1 1 .9 1.700 1.900 1.700h8.600c1 0 1.800-.7 1.900-1.700L19.200 6M8.400 10.200v7.400M11.500 10.200v7.400M14.600 10.200v7.400"/></g></svg>
<div class="a " style="top:703.30px;font-size:14px;line-height:16px;color:#7d808d;font-weight:700;letter-spacing:-0.694px;left:936.60px;">Xóa</div>
</body>
</html>
